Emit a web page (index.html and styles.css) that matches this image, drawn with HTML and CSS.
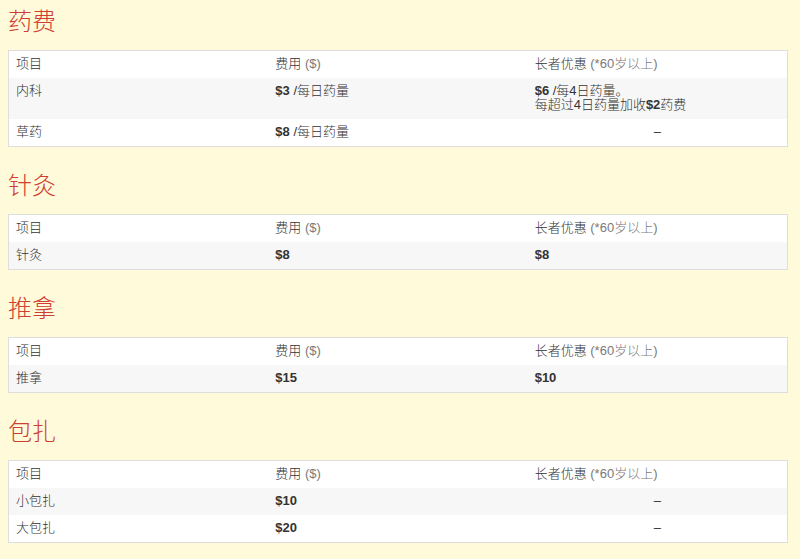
FILE: index.html
```html
<!DOCTYPE html>
<html lang="zh">
<head>
<meta charset="utf-8">
<title>收费</title>
<link rel="stylesheet" href="styles.css">
</head>
<body>
<section class="sec">
  <h2 class="title">药费</h2>
  <table class="fees">
    <tr><td>项目</td><td>费用 <span class="muted">($)</span></td><td>长者优惠 <span class="muted">(*60岁以上)</span></td></tr>
    <tr class="alt"><td>内科</td><td><b>$3</b> /每日药量</td><td><b>$6</b> /每4日药量。<br>每超过4日药量加收<b>$2</b>药费</td></tr>
    <tr><td>草药</td><td><b>$8</b> /每日药量</td><td class="none">–</td></tr>
  </table>
</section>
<section class="sec">
  <h2 class="title">针灸</h2>
  <table class="fees">
    <tr><td>项目</td><td>费用 <span class="muted">($)</span></td><td>长者优惠 <span class="muted">(*60岁以上)</span></td></tr>
    <tr class="alt"><td>针灸</td><td><b>$8</b></td><td><b>$8</b></td></tr>
  </table>
</section>
<section class="sec">
  <h2 class="title">推拿</h2>
  <table class="fees">
    <tr><td>项目</td><td>费用 <span class="muted">($)</span></td><td>长者优惠 <span class="muted">(*60岁以上)</span></td></tr>
    <tr class="alt"><td>推拿</td><td><b>$15</b></td><td><b>$10</b></td></tr>
  </table>
</section>
<section class="sec">
  <h2 class="title">包扎</h2>
  <table class="fees">
    <tr><td>项目</td><td>费用 <span class="muted">($)</span></td><td>长者优惠 <span class="muted">(*60岁以上)</span></td></tr>
    <tr class="alt"><td>小包扎</td><td><b>$10</b></td><td class="none">–</td></tr>
    <tr><td>大包扎</td><td><b>$20</b></td><td class="none">–</td></tr>
  </table>
</section>
</body>
</html>
```
FILE: styles.css
```css
html, body {
  margin: 0;
  padding: 0;
  background: #fffad9;
}
body {
  padding: 5px 8px 0 8px;
  font-family: "Liberation Sans", "Noto Sans CJK SC", sans-serif;
  font-size: 13px;
  font-weight: 300;
  color: #333;
}
.sec {
  margin-bottom: 22px;
}
.title {
  margin: 0 0 15px 0;
  height: 30px;
  line-height: 30px;
  font-family: "Noto Sans CJK SC", serif;
  font-weight: 300;
  font-size: 24px;
  color: #cf3e33;
}
.fees {
  width: 780px;
  border-collapse: collapse;
  table-layout: fixed;
  background: #fff;
  border: 1px solid #dedede;
}
.fees td {
  padding: 6px 7px 7px 7px;
  line-height: 14px;
  vertical-align: top;
  width: 33.33%;
}
.fees tr.alt td {
  background: #f7f7f7;
}
.fees b {
  font-weight: bold;
  color: #333;
}
.muted {
  color: #7a7a7a;
}
.fees td.none {
  text-align: center;
}
```
